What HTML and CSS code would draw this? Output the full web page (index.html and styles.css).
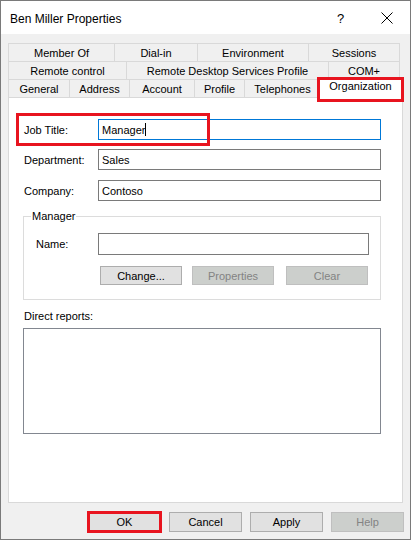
FILE: index.html
```html
<!DOCTYPE html>
<html>
<head>
<meta charset="utf-8">
<link rel="stylesheet" href="styles.css">
</head>
<body>
<div class="window">
  <div class="titlebar">
    <span class="title">Ben Miller Properties</span>
    <span class="help">?</span>
    <span class="close"><svg width="12" height="12" viewBox="0 0 12 12"><path d="M0.5 0.5 L11.5 11.5 M11.5 0.5 L0.5 11.5" stroke="#000" stroke-width="1" fill="none"/></svg></span>
  </div>
  <div class="body">
    <div class="tabs">
      <div class="tabrow">
        <div class="tab w106">Member Of</div>
        <div class="tab w83">Dial-in</div>
        <div class="tab w111">Environment</div>
        <div class="tab grow">Sessions</div>
      </div>
      <div class="tabrow">
        <div class="tab w118">Remote control</div>
        <div class="tab w202">Remote Desktop Services Profile</div>
        <div class="tab grow">COM+</div>
      </div>
      <div class="tabrow">
        <div class="tab w61">General</div>
        <div class="tab w60">Address</div>
        <div class="tab w65">Account</div>
        <div class="tab w50">Profile</div>
        <div class="tab w76">Telephones</div>
        <div class="tab selected grow">Organization<span class="redbox red-tab"></span></div>
      </div>
    </div>
    <div class="panel">
      <div class="fieldrow first">
        <span class="label">Job Title:</span>
        <div class="textbox focus"><span>Manager</span><span class="caret"></span></div>
        <span class="redbox red-job"></span>
      </div>
      <div class="fieldrow">
        <span class="label">Department:</span>
        <div class="textbox"><span>Sales</span></div>
      </div>
      <div class="fieldrow last">
        <span class="label">Company:</span>
        <div class="textbox"><span>Contoso</span></div>
      </div>
      <fieldset class="group">
        <legend>Manager</legend>
        <div class="namerow">
          <span class="label">Name:</span>
          <div class="textbox"></div>
        </div>
        <div class="grpbuttons">
          <div class="btn">Change...</div>
          <div class="btn disabled">Properties</div>
          <div class="btn disabled">Clear</div>
        </div>
      </fieldset>
      <div class="drlabel">Direct reports:</div>
      <div class="listbox"></div>
    </div>
    <div class="buttons">
      <div class="btn dlg default">OK<span class="redbox red-ok"></span></div>
      <div class="btn dlg">Cancel</div>
      <div class="btn dlg">Apply</div>
      <div class="btn dlg disabled">Help</div>
    </div>
  </div>
</div>
</body>
</html>
```
FILE: styles.css
```css
* { box-sizing: border-box; }
html, body { margin: 0; padding: 0; background: #ffffff; }
body { font-family: "Liberation Sans", Arial, sans-serif; font-size: 11px; color: #000; }

.window {
  width: 411px;
  height: 540px;
  border: 1px solid #7a7a7a;
  background: #f0f0f0;
  display: flex;
  flex-direction: column;
}

.titlebar {
  height: 33px;
  background: #ffffff;
  display: flex;
  align-items: center;
  padding-left: 9px;
  flex-shrink: 0;
}
.title { font-size: 12px; flex: 1; padding-top: 2px; }
.help { font-size: 13px; width: 12px; margin-right: 32px; padding-top: 1px; }
.close { width: 12px; margin-right: 17px; display: flex; padding-top: 1px; }

.body {
  padding: 9px 7px 0 7px;
  display: flex;
  flex-direction: column;
}

.tabs { width: 392px; display: flex; flex-direction: column; }
.tabrow { display: flex; height: 18px; }
.tab {
  height: 18px;
  border: 1px solid #d9d9d9;
  border-bottom: none;
  margin-left: -1px;
  display: flex;
  align-items: center;
  justify-content: center;
  background: #f0f0f0;
  white-space: nowrap;
  padding-top: 1px;
}
.tabrow .tab:first-child { margin-left: 0; }
.tab.grow { flex: 1; }
.w106 { width: 107px; }
.w83 { width: 84px; }
.w111 { width: 112px; }
.w118 { width: 119px; }
.w202 { width: 203px; }
.w61 { width: 62px; }
.w60 { width: 61px; }
.w65 { width: 66px; }
.w50 { width: 51px; }
.w76 { width: 77px; }
.tab.selected {
  position: relative;
  height: 21px;
  margin-top: -2px;
  margin-right: -2px;
  margin-left: -2px;
  background: #ffffff;
  z-index: 2;
  padding-top: 0;
  padding-bottom: 4px;
}

.redbox {
  position: absolute;
  border: 3px solid #e8141f;
  z-index: 5;
  pointer-events: none;
}
.red-tab { left: -3px; top: -1px; right: -3px; bottom: -4px; }

.panel {
  position: relative;
  width: 395px;
  height: 406px;
  border: 1px solid #d9d9d9;
  background: #ffffff;
  z-index: 1;
  padding: 21px 0 0 14px;
  display: flex;
  flex-direction: column;
}

.fieldrow {
  position: relative;
  display: flex;
  align-items: center;
  height: 21px;
  margin-bottom: 10px;
}
.fieldrow.first { margin-bottom: 9px; }
.fieldrow.last { margin-bottom: 0; }
.fieldrow .label { width: 75px; padding-left: 1px; }
.textbox {
  width: 283px;
  height: 21px;
  border: 1px solid #7a7a7a;
  background: #fff;
  display: flex;
  align-items: center;
  padding-left: 3px;
  font-size: 11px;
}
.textbox.focus { border-color: #0078d7; }
.caret { width: 1px; height: 13px; background: #000; }
.red-job { left: -7px; top: -6px; width: 194px; height: 33px; }

.group {
  margin: 9px 0 0 0;
  width: 358px;
  height: 90px;
  border: 1px solid #dcdcdc;
  padding: 0;
  min-width: 0;
}
.group legend { padding: 0 1px; margin-left: 7px; font-size: 11px; height: 13px; line-height: 13px; }
.namerow { display: flex; align-items: center; height: 22px; margin-top: 10px; padding-left: 12px; }
.namerow .label { width: 62px; }
.namerow .textbox { width: 271px; height: 22px; }
.grpbuttons { display: flex; margin: 11px 0 0 76px; gap: 10px; }
.grpbuttons .btn:nth-child(3) { margin-left: 2px; }

.btn {
  width: 82px;
  height: 19px;
  background: #e1e1e1;
  border: 1px solid #adadad;
  display: flex;
  align-items: center;
  justify-content: center;
  font-size: 11px;
}
.btn.disabled { background: #cccfcc; border-color: #bfbfbf; color: #838383; }

.drlabel { margin-top: 10px; padding-left: 1px; height: 18px; }
.listbox {
  width: 358px;
  height: 106px;
  border: 1px solid #828790;
  background: #fff;
}

.buttons {
  display: flex;
  justify-content: flex-end;
  gap: 8px;
  padding: 9px 0 0 0;
  width: 396px;
}
.btn.dlg { width: 73px; height: 20px; }
.btn.default { position: relative; border-color: #0078d7; }
.red-ok { left: -2px; top: -2px; right: -2px; bottom: -2px; }
```
